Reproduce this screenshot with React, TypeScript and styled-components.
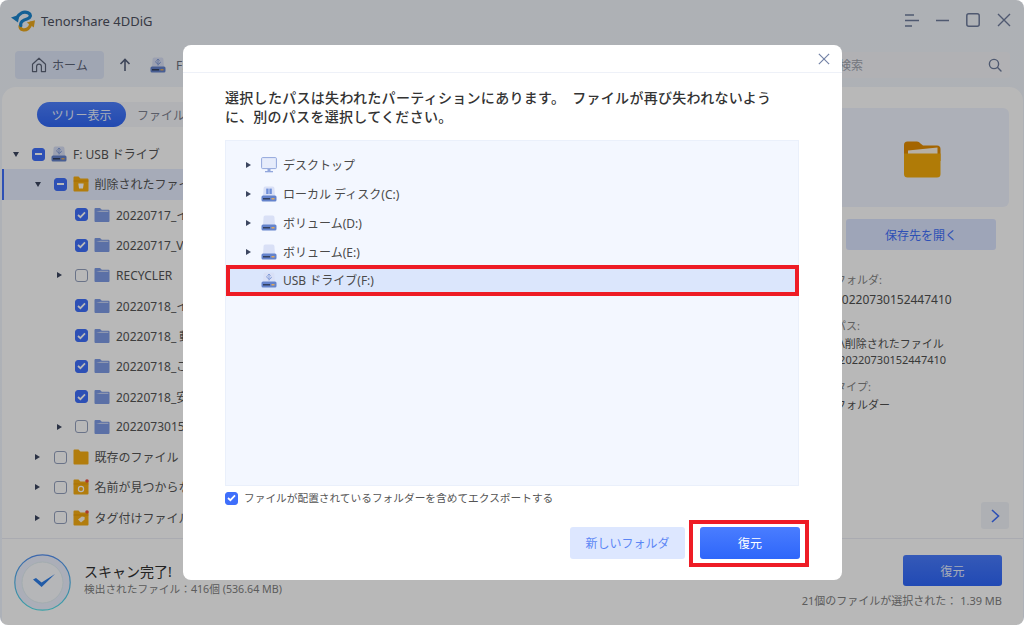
import * as React from 'react';
import styled, { createGlobalStyle } from 'styled-components';

const GlobalStyle = createGlobalStyle`
  html, body {
    margin: 0;
    padding: 0;
    background: #fff;
    overflow: hidden;
  }
  * {
    box-sizing: border-box;
  }
  body {
    font-family: "Noto Sans", "Noto Sans CJK JP", sans-serif;
    color: #4a4a4a;
  }
`;

const Window = styled.div`
  position: relative;
  width: 1024px;
  height: 625px;
  display: flex;
  flex-direction: column;
  border-radius: 8px;
  overflow: hidden;
  background: linear-gradient(180deg, #f2f5fb 0%, #f0f5ff 100%);
  padding-left: 2px;
  padding-right: 1px;
`;

const TitleBar = styled.div`
  height: 40px;
  display: flex;
  align-items: center;
  padding: 2px 12px 0 9px;
  flex-shrink: 0;
`;

const AppName = styled.div`
  margin-left: 6px;
  font-size: 13px;
  color: #4d5160;
  flex: 1;
`;

const WindowControls = styled.div`
  display: flex;
  align-items: center;
  gap: 17px;
  color: #6e7c9c;
  margin-top: -2px;
`;

const Toolbar = styled.div`
  height: 47px;
  display: flex;
  align-items: center;
  padding: 3px 13px 0 13px;
  flex-shrink: 0;
`;

const HomeButton = styled.div`
  width: 89px;
  height: 28px;
  display: flex;
  align-items: center;
  gap: 5px;
  padding-left: 16px;
  border-radius: 4px;
  background: #dee6f9;
  color: #5c6478;
  font-size: 12px;
`;

const UpButton = styled.div`
  width: 16px;
  margin-left: 13px;
  display: flex;
  color: #57617c;
`;

const Crumb = styled.div`
  margin-left: 17px;
  display: flex;
  align-items: center;
  gap: 10px;
  font-size: 12px;
  color: #6a6f7c;
`;

const SearchBox = styled.div`
  margin-left: auto;
  width: 180px;
  height: 26px;
  border-radius: 3px;
  background: #f5f6fa;
  display: flex;
  align-items: center;
  justify-content: space-between;
  padding: 0 8px 0 9px;
  font-size: 12px;
  color: #a0a4ae;
`;

const Panel = styled.div`
  flex: 1;
  min-height: 0;
  display: flex;
  flex-direction: column;
  background: #fff;
  border-radius: 14px 14px 0 0;
`;

const Content = styled.div`
  flex: 1;
  min-height: 0;
  display: flex;
`;

const Sidebar = styled.div`
  flex: 1;
  min-width: 0;
  padding-top: 15px;
`;

const TabGroup = styled.div`
  margin-left: 35px;
  width: 260px;
  height: 25px;
  display: flex;
  align-items: center;
  border-radius: 13px;
  background: #f6f7fb;
  margin-bottom: 12px;
`;

const Tab = styled.div<{ $active?: boolean }>`
  width: ${p => (p.$active ? '89px' : 'auto')};
  height: 25px;
  display: flex;
  align-items: center;
  justify-content: center;
  margin-left: ${p => (p.$active ? '0' : '11px')};
  border-radius: 13px;
  font-size: 12px;
  background: ${p => (p.$active ? 'linear-gradient(180deg, #4d80ff, #2f66f5)' : 'transparent')};
  color: ${p => (p.$active ? '#e8efff' : '#7d8290')};
`;

const TreeRow = styled.div<{ $level: number; $selected?: boolean }>`
  height: 30.3px;
  display: flex;
  align-items: center;
  padding-left: ${p => 7 + p.$level * 21.5}px;
  white-space: nowrap;
  font-size: 12px;
  color: #555;
  background: ${p => (p.$selected ? '#e6edff' : 'transparent')};
  box-shadow: ${p => (p.$selected ? 'inset 2px 0 0 #3f6ffb' : 'none')};
`;

const CaretSlot = styled.div`
  width: 14px;
  height: 14px;
  display: flex;
  align-items: center;
  justify-content: center;
  margin-right: 9px;
  flex-shrink: 0;
`;

const Caret = styled.span<{ $open?: boolean }>`
  width: 0;
  height: 0;
  border-style: solid;
  border-color: transparent;
  ${p =>
    p.$open
      ? 'border-width: 5px 3.5px 0 3.5px; border-top-color: #3c4660;'
      : 'border-width: 3.5px 0 3.5px 5px; border-left-color: #3c4660;'}
`;

const CheckBox = styled.span<{ $on?: boolean }>`
  width: 13px;
  height: 13px;
  flex-shrink: 0;
  border-radius: 3px;
  display: flex;
  align-items: center;
  justify-content: center;
  background: ${p => (p.$on ? '#3f6ffb' : '#fff')};
  border: 1px solid ${p => (p.$on ? '#3f6ffb' : '#93a0bd')};
`;

const RowIcon = styled.span`
  display: flex;
  flex-shrink: 0;
  margin: 0 6px;
`;

const Details = styled.div`
  width: 188px;
  flex-shrink: 0;
  padding: 21px 14px 9px 0;
  display: flex;
  flex-direction: column;
`;

const PreviewCard = styled.div`
  height: 99px;
  border-radius: 6px;
  background: #f0f4ff;
  display: flex;
  align-items: center;
  justify-content: center;
  padding-top: 3px;
  flex-shrink: 0;
`;

const OpenButton = styled.div`
  width: 150px;
  height: 31px;
  margin: 12px 0 0 11px;
  border-radius: 3px;
  background: #dce5ff;
  color: #3f6ffb;
  font-size: 12px;
  display: flex;
  align-items: center;
  justify-content: center;
  flex-shrink: 0;
`;

const InfoLabel = styled.div<{ $gap: number }>`
  margin-top: ${p => p.$gap}px;
  font-size: 11px;
  line-height: 17px;
  color: #858585;
`;

const InfoValue = styled.div<{ $big?: boolean }>`
  margin-top: ${p => (p.$big ? '4px' : '2px')};
  font-size: ${p => (p.$big ? '12px' : '11px')};
  line-height: 16px;
  color: #505050;
  white-space: nowrap;
`;

const PathLine = styled.span`
  margin-left: -3px;
`;

const NextButton = styled.div`
  margin-top: auto;
  align-self: flex-end;
  width: 28px;
  height: 27px;
  border-radius: 3px;
  background: #f2f4fa;
  color: #3f6ffb;
  display: flex;
  align-items: center;
  justify-content: center;
`;

const Footer = styled.div`
  height: 87px;
  flex-shrink: 0;
  border-top: 1px solid #eceef5;
  display: flex;
  align-items: center;
  justify-content: space-between;
  padding: 0 21px 0 12px;
`;

const Status = styled.div`
  display: flex;
  align-items: center;
  gap: 13px;
`;

const StatusText = styled.div`
  margin-bottom: 4px;
`;

const StatusTitle = styled.div`
  font-size: 14px;
  line-height: 18px;
  color: #303030;
`;

const StatusSub = styled.div`
  font-size: 10.7px;
  line-height: 16px;
  color: #808080;
`;

const FooterActions = styled.div`
  display: flex;
  flex-direction: column;
  align-items: flex-end;
  gap: 7px;
`;

const RestoreButton = styled.div`
  width: 99px;
  height: 31px;
  border-radius: 3px;
  background: linear-gradient(180deg, #4a7dff, #2e66fa);
  color: #e6eeff;
  font-size: 12px;
  display: flex;
  align-items: center;
  justify-content: center;
`;

const SelectedInfo = styled.div`
  font-size: 11px;
  line-height: 16px;
  color: #808080;
  white-space: nowrap;
`;

const Overlay = styled.div`
  position: absolute;
  inset: 0;
  background: rgba(0, 0, 0, 0.28);
`;

const Modal = styled.div`
  position: absolute;
  left: 183px;
  top: 45px;
  width: 659px;
  height: 535px;
  border-radius: 8px;
  background: #fff;
  display: flex;
  flex-direction: column;
`;

const ModalHeader = styled.div`
  height: 28px;
  flex-shrink: 0;
  border-bottom: 1px solid #eef1f8;
  display: flex;
  align-items: center;
  justify-content: flex-end;
  padding: 0 12px 0 0;
  color: #7685a8;
`;

const ModalBody = styled.div`
  flex: 1;
  min-height: 0;
  display: flex;
  flex-direction: column;
  padding: 15px 43px 21px 42px;
`;

const Heading = styled.div`
  font-size: 14px;
  line-height: 19px;
  font-weight: 500;
  letter-spacing: 0.3px;
  word-spacing: 3px;
  color: #333;
  white-space: nowrap;
`;

const PathBox = styled.div`
  margin-top: 14px;
  height: 346px;
  flex-shrink: 0;
  background: #f3f7ff;
  border: 1px solid #eaf0fb;
  padding: 10px 0 0 0;
`;

const PathRow = styled.div<{ $marked?: boolean }>`
  position: relative;
  height: 28.75px;
  display: flex;
  align-items: center;
  padding-left: 20px;
  font-size: 12px;
  color: #4a4a4a;
  ${p =>
    p.$marked
      ? `
    background: #dbe6fc;
    &::after {
      content: '';
      position: absolute;
      inset: -1px -1px -1px 0;
      border: 4px solid #ee1c25;
    }
  `
      : ''}
`;

const PathCaret = styled.div`
  width: 10px;
  display: flex;
  flex-shrink: 0;
`;

const PathIcon = styled.span`
  display: flex;
  margin: 0 6px 0 5px;
`;

const ExportOption = styled.div`
  margin-top: 5px;
  display: flex;
  align-items: center;
  gap: 6px;
  font-size: 10.7px;
  line-height: 14px;
  color: #555;
`;

const ModalActions = styled.div`
  margin-top: auto;
  display: flex;
  justify-content: flex-end;
  gap: 15px;
  margin-right: -1px;
`;

const GhostButton = styled.div`
  width: 115px;
  height: 32px;
  border-radius: 3px;
  background: #dde7ff;
  color: #5b86f5;
  font-size: 12px;
  display: flex;
  align-items: center;
  justify-content: center;
`;

const PrimaryButton = styled.div`
  position: relative;
  width: 100px;
  height: 32px;
  border-radius: 3px;
  background: linear-gradient(180deg, #4a7dff, #2e66fa);
  color: #fff;
  font-size: 12px;
  display: flex;
  align-items: center;
  justify-content: center;
  &::after {
    content: '';
    position: absolute;
    inset: -7px -9px -8px -11px;
    border: 4px solid #ee1c25;
  }
`;

const Logo = () => (
  <svg width="24" height="22" viewBox="0 0 24 22" fill="none">
    <path d="M9 16 C9 20.5 14 20.8 17 18.6 C19 17.2 19.6 15 20 13" stroke="#eaa81e" strokeWidth="3.2" strokeLinecap="round" />
    <path d="M15.8 12.5 L24 10.2 L22.8 17.4 Z" fill="#eaa81e" />
    <path d="M5.5 8.5 C8 3 13 0.8 17 2.8 C21 4.8 19.4 8 16 9 C12 10.2 9 12 9.8 15.5" stroke="#1b86cf" strokeWidth="3.2" strokeLinecap="round" />
    <path d="M0 7.6 L8.4 4.8 L7 12.4 Z" fill="#1b86cf" />
  </svg>
);

const HomeIcon = () => (
  <svg width="16" height="16" viewBox="0 0 16 16" fill="none" stroke="currentColor" strokeWidth="1.2" strokeLinejoin="round">
    <path d="M1.5 7.2 L8 1.2 L14.5 7.2 V14.6 H10.4 V9.6 A2.4 2.4 0 0 0 5.6 9.6 V14.6 H1.5 Z" />
  </svg>
);

const UpIcon = () => (
  <svg width="16" height="16" viewBox="0 0 16 16" fill="none" stroke="currentColor" strokeWidth="1.6">
    <path d="M8 14 V2.5 M3.5 7 L8 2.5 L12.5 7" />
  </svg>
);

const SearchIcon = () => (
  <svg width="14" height="14" viewBox="0 0 14 14" fill="none" stroke="#6e7c9c" strokeWidth="1.4" strokeLinecap="round">
    <circle cx="6" cy="6" r="4.6" />
    <path d="M9.6 9.6 L13 13" />
  </svg>
);

const MenuIcon = () => (
  <svg width="14" height="13" viewBox="0 0 14 13" fill="none" stroke="currentColor" strokeWidth="1.4">
    <path d="M0 1 H9 M0 6.5 H14 M0 12 H7" />
  </svg>
);

const MinimizeIcon = () => (
  <svg width="13" height="13" viewBox="0 0 13 13" fill="none" stroke="currentColor" strokeWidth="1.4">
    <path d="M0 6.5 H13" />
  </svg>
);

const MaximizeIcon = () => (
  <svg width="14" height="14" viewBox="0 0 14 14" fill="none" stroke="currentColor" strokeWidth="1.5">
    <rect x="0.8" y="0.8" width="12.4" height="12.4" rx="2" />
  </svg>
);

const CloseIcon = ({ size }: { size: number }) => (
  <svg width={size} height={size} viewBox="0 0 14 14" fill="none" stroke="currentColor" strokeWidth="1.4">
    <path d="M1 1 L13 13 M13 1 L1 13" />
  </svg>
);

const Tick = () => (
  <svg width="9" height="8" viewBox="0 0 9 8" fill="none" stroke="#fff" strokeWidth="1.7">
    <path d="M1 4 L3.4 6.2 L8 1.3" />
  </svg>
);

const Dash = () => (
  <svg width="7" height="2" viewBox="0 0 7 2">
    <rect width="7" height="2" fill="#fff" />
  </svg>
);

const DriveIcon = ({ kind }: { kind: 'usb' | 'local' | 'plain' }) => (
  <svg width="16" height="16" viewBox="0 0 16 16">
    <path d="M2.6 2 Q2.6 0.5 4.2 0.5 H11.8 Q13.4 0.5 13.4 2 L14 10 H2 Z" fill="#d9e0f6" />
    <path d="M0.5 11 Q0.5 9.5 2 9.5 H14 Q15.5 9.5 15.5 11 V14 Q15.5 15.5 14 15.5 H2 Q0.5 15.5 0.5 14 Z" fill="#6483cc" />
    <rect x="2" y="12" width="7" height="1.5" fill="#33415f" />
    <rect x="10.5" y="12" width="3" height="1.5" fill="#e0a85a" />
    {kind === 'usb' && (
      <path d="M8 2 V8.5 M6.4 3.6 L8 2 L9.6 3.6 M8 7 L5.8 5.4 V4.2 M8 7.6 L10.2 6 V4.8" stroke="#7f9ad8" strokeWidth="0.9" fill="none" />
    )}
    {kind === 'local' && (
      <g fill="#6f8fd8">
        <rect x="5.2" y="2.6" width="2.4" height="5.4" />
        <rect x="8.4" y="2.6" width="2.4" height="5.4" />
      </g>
    )}
  </svg>
);

const MonitorIcon = () => (
  <svg width="16" height="16" viewBox="0 0 16 16">
    <rect x="0.6" y="0.6" width="14.8" height="11" rx="1" fill="#e6ecfb" stroke="#92a7dc" strokeWidth="1" />
    <rect x="6.5" y="12" width="3" height="2" fill="#92a7dc" />
    <rect x="4" y="14" width="8" height="1.3" fill="#92a7dc" />
  </svg>
);

const FolderIcon = ({ color }: { color: string }) => (
  <svg width="16" height="16" viewBox="0 0 16 16">
    <path d="M0.5 2 Q0.5 1 1.5 1 H6 L7.8 2.8 H14.5 Q15.5 2.8 15.5 3.8 V14 Q15.5 15 14.5 15 H1.5 Q0.5 15 0.5 14 Z" fill={color} />
    <path d="M6.2 3.8 H14.4 V5 H2 Z" fill="#fff" opacity="0.55" />
  </svg>
);

const OpenFolderIcon = () => (
  <svg width="37" height="37" viewBox="0 0 37 37">
    <path d="M0 4 Q0 0.5 3.5 0.5 H13 Q15 0.5 16.5 2.5 L19 4.5 H33 Q36.5 4.5 36.5 8 V20 H0 Z" fill="#e38c00" />
    <path d="M4 9.5 L33.5 6.5 V15 H4 Z" fill="#fff" opacity="0.9" />
    <path d="M0 12.5 L36.5 12.5 V33 Q36.5 36.5 33 36.5 H3.5 Q0 36.5 0 33 Z" fill="#f4ab0b" />
  </svg>
);

const SpecialFolderIcon = ({ mark }: { mark: 'trash' | 'lost' | 'tag' | 'none' }) => (
  <svg width="16" height="16" viewBox="0 0 16 16">
    <path d="M0.5 1.5 Q0.5 0.5 1.5 0.5 H5.5 L7.4 2.5 H14.5 Q15.5 2.5 15.5 3.5 V14.5 Q15.5 15.5 14.5 15.5 H1.5 Q0.5 15.5 0.5 14.5 Z" fill="#f7ae12" />
    <path d="M0.5 4.5 H15.5 V5.4 H0.5 Z" fill="#e08c00" opacity={mark === 'none' ? 0 : 0.6} />
    {mark === 'trash' && <path d="M5.3 7.6 H10.7 L10 12.4 H6 Z" fill="#fff" />}
    {mark === 'lost' && (
      <>
        <circle cx="8" cy="10" r="2.6" fill="none" stroke="#fff" strokeWidth="1.2" />
        <circle cx="14" cy="2" r="1.8" fill="#f0503c" />
      </>
    )}
    {mark === 'tag' && (
      <>
        <path d="M5 9.5 L8.8 6.6 L11.6 7 L11.6 9.6 L8 12.6 Z" fill="#fff" opacity="0.9" />
        <circle cx="14" cy="2" r="1.8" fill="#f0503c" />
      </>
    )}
  </svg>
);

const ScanBadge = () => (
  <svg width="57" height="57" viewBox="0 0 57 57" fill="none">
    <defs>
      <linearGradient id="ring" x1="0" y1="0" x2="0" y2="1">
        <stop offset="0" stopColor="#5590f0" />
        <stop offset="1" stopColor="#54e0e8" />
      </linearGradient>
    </defs>
    <circle cx="28.5" cy="28.5" r="27.7" fill="#eef2ff" stroke="url(#ring)" strokeWidth="1.2" />
    <circle cx="28.5" cy="28.5" r="20.5" fill="#fbfcff" stroke="#dcecf0" strokeWidth="0.8" />
    <path d="M19 25.5 L27.6 33 L41 20 L27.6 28.5 L22 24 Z" fill="#2f7fe8" />
  </svg>
);

type Mark = 'checked' | 'mixed' | 'none';

interface ITreeItem {
  level: number;
  caret?: 'open' | 'closed';
  mark: Mark;
  icon: React.ReactNode;
  label: string;
  selected?: boolean;
}

const blueFolder = <FolderIcon color="#7e9be6" />;

const treeItems: ITreeItem[] = [
  { level: 0, caret: 'open', mark: 'mixed', icon: <DriveIcon kind="usb" />, label: 'F: USB ドライブ' },
  { level: 1, caret: 'open', mark: 'mixed', icon: <SpecialFolderIcon mark="trash" />, label: '削除されたファイル', selected: true },
  { level: 2, mark: 'checked', icon: blueFolder, label: '20220717_イメージ' },
  { level: 2, mark: 'checked', icon: blueFolder, label: '20220717_Video' },
  { level: 2, caret: 'closed', mark: 'none', icon: blueFolder, label: 'RECYCLER' },
  { level: 2, mark: 'checked', icon: blueFolder, label: '20220718_イメージ' },
  { level: 2, mark: 'checked', icon: blueFolder, label: '20220718_  動画' },
  { level: 2, mark: 'checked', icon: blueFolder, label: '20220718_ごみ' },
  { level: 2, mark: 'checked', icon: blueFolder, label: '20220718_安全' },
  { level: 2, caret: 'closed', mark: 'none', icon: blueFolder, label: '20220730152447410' },
  { level: 1, caret: 'closed', mark: 'none', icon: <SpecialFolderIcon mark="none" />, label: '既存のファイル' },
  { level: 1, caret: 'closed', mark: 'none', icon: <SpecialFolderIcon mark="lost" />, label: '名前が見つからないファイル' },
  { level: 1, caret: 'closed', mark: 'none', icon: <SpecialFolderIcon mark="tag" />, label: 'タグ付けファイル' }
];

const pathItems = [
  { icon: <MonitorIcon />, label: 'デスクトップ' },
  { icon: <DriveIcon kind="local" />, label: 'ローカル ディスク(C:)' },
  { icon: <DriveIcon kind="plain" />, label: 'ボリューム(D:)' },
  { icon: <DriveIcon kind="plain" />, label: 'ボリューム(E:)' }
];

const Check = ({ mark }: { mark: Mark }) => (
  <CheckBox $on={mark !== 'none'}>
    {mark === 'checked' && <Tick />}
    {mark === 'mixed' && <Dash />}
  </CheckBox>
);

export default function App() {
  return (
    <>
      <GlobalStyle />
      <Window>
        <TitleBar>
          <Logo />
          <AppName>Tenorshare 4DDiG</AppName>
          <WindowControls>
            <MenuIcon />
            <MinimizeIcon />
            <MaximizeIcon />
            <CloseIcon size={14} />
          </WindowControls>
        </TitleBar>
        <Toolbar>
          <HomeButton>
            <HomeIcon />
            ホーム
          </HomeButton>
          <UpButton>
            <UpIcon />
          </UpButton>
          <Crumb>
            <DriveIcon kind="usb" />
            F: USB ドライブ
          </Crumb>
          <SearchBox>
            検索
            <SearchIcon />
          </SearchBox>
        </Toolbar>
        <Panel>
          <Content>
            <Sidebar>
              <TabGroup>
                <Tab $active>ツリー表示</Tab>
                <Tab>ファイル表示</Tab>
              </TabGroup>
              {treeItems.map(item => (
                <TreeRow key={item.label} $level={item.level} $selected={item.selected}>
                  <CaretSlot>{item.caret && <Caret $open={item.caret === 'open'} />}</CaretSlot>
                  <Check mark={item.mark} />
                  <RowIcon>{item.icon}</RowIcon>
                  {item.label}
                </TreeRow>
              ))}
            </Sidebar>
            <Details>
              <PreviewCard>
                <OpenFolderIcon />
              </PreviewCard>
              <OpenButton>保存先を開く</OpenButton>
              <InfoLabel $gap={21}>フォルダ:</InfoLabel>
              <InfoValue $big>20220730152447410</InfoValue>
              <InfoLabel $gap={9}>パス:</InfoLabel>
              <InfoValue>
                <PathLine>F:\削除されたファイル</PathLine>
                <br />
                \20220730152447410
              </InfoValue>
              <InfoLabel $gap={10}>タイプ:</InfoLabel>
              <InfoValue>フォルダー</InfoValue>
              <NextButton>
                <svg width="9" height="14" viewBox="0 0 9 14" fill="none" stroke="currentColor" strokeWidth="1.6">
                  <path d="M1 1 L7.5 7 L1 13" />
                </svg>
              </NextButton>
            </Details>
          </Content>
          <Footer>
            <Status>
              <ScanBadge />
              <StatusText>
                <StatusTitle>スキャン完了!</StatusTitle>
                <StatusSub>検出されたファイル：416個 (536.64 MB)</StatusSub>
              </StatusText>
            </Status>
            <FooterActions>
              <RestoreButton>復元</RestoreButton>
              <SelectedInfo>21個のファイルが選択された： 1.39 MB</SelectedInfo>
            </FooterActions>
          </Footer>
        </Panel>
        <Overlay />
        <Modal>
          <ModalHeader>
            <CloseIcon size={12} />
          </ModalHeader>
          <ModalBody>
            <Heading>
              選択したパスは失われたパーティションにあります。 ファイルが再び失われないよう
              <br />
              に、別のパスを選択してください。
            </Heading>
            <PathBox>
              {pathItems.map(item => (
                <PathRow key={item.label}>
                  <PathCaret>
                    <Caret />
                  </PathCaret>
                  <PathIcon>{item.icon}</PathIcon>
                  {item.label}
                </PathRow>
              ))}
              <PathRow $marked>
                <PathCaret />
                <PathIcon>
                  <DriveIcon kind="usb" />
                </PathIcon>
                USB ドライブ(F:)
              </PathRow>
            </PathBox>
            <ExportOption>
              <Check mark="checked" />
              ファイルが配置されているフォルダーを含めてエクスポートする
            </ExportOption>
            <ModalActions>
              <GhostButton>新しいフォルダ</GhostButton>
              <PrimaryButton>復元</PrimaryButton>
            </ModalActions>
          </ModalBody>
        </Modal>
      </Window>
    </>
  );
}
